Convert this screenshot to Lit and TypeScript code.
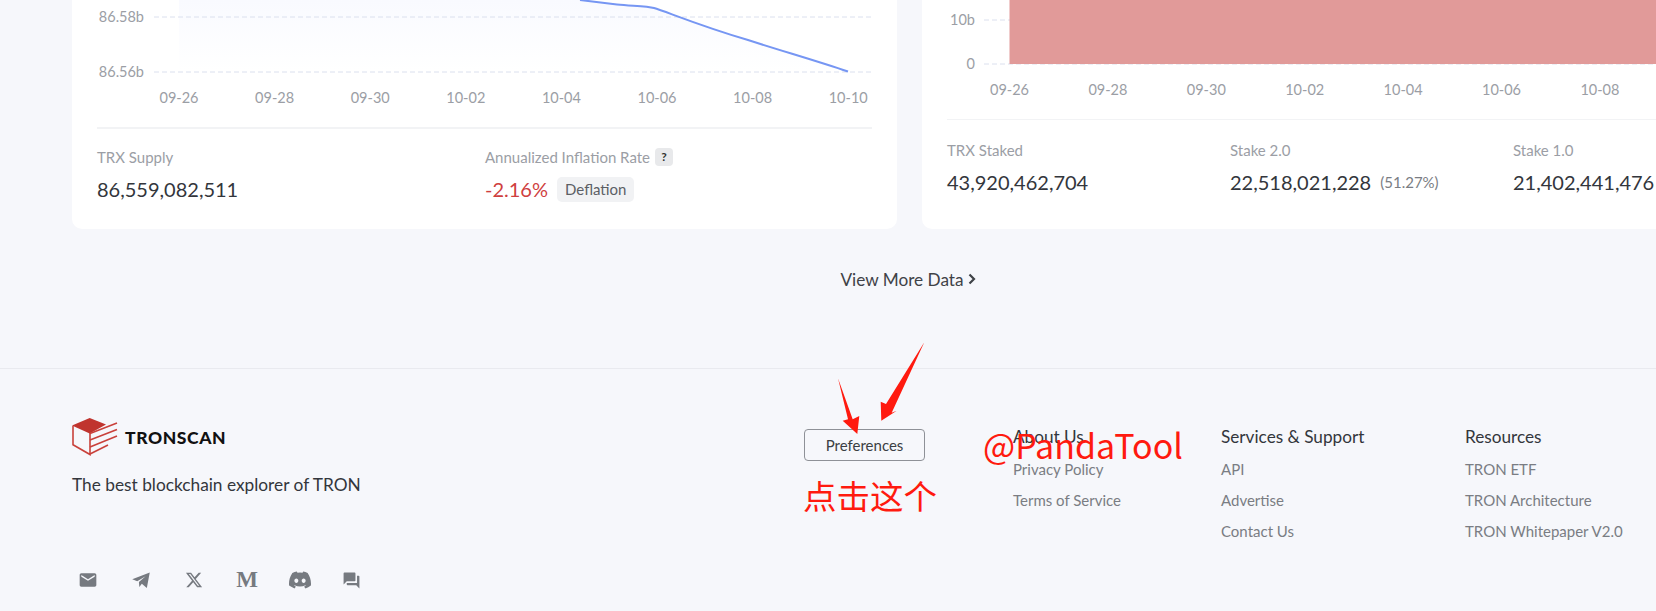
import { LitElement, html, css, svg } from 'lit';
import { customElement } from 'lit/decorators.js';

const leftDates = ['09-26', '09-28', '09-30', '10-02', '10-04', '10-06', '10-08', '10-10'];
const rightDates = leftDates.slice(0, 7);

const footerCols = [
  { title: 'About Us', links: ['Privacy Policy', 'Terms of Service'], width: 208 },
  { title: 'Services & Support', links: ['API', 'Advertise', 'Contact Us'], width: 244 },
  { title: 'Resources', links: ['TRON ETF', 'TRON Architecture', 'TRON Whitepaper V2.0'], width: 191 },
];

const linePath = 'M483 0L520 4.5C535 6 550 6 557 8C568 11 600 25 651 40C685 51 720 61 751 71.5';

@customElement('supply-chart')
export class SupplyChart extends LitElement {
  static styles = css`
    :host { display: block; height: 127px; }
    svg { display: block; width: 775px; height: 127px; overflow: visible; }
    text { font: 14.5px Lato, sans-serif; fill: #9b9ea5; }
    .grid { stroke: #dbe0ee; stroke-dasharray: 5 3; }
  `;

  render() {
    return html`<svg viewBox="0 0 775 127">
      <defs>
        <linearGradient id="fade" x1="0" y1="0" x2="0" y2="1">
          <stop offset="0" stop-color="#f9faff"></stop>
          <stop offset="1" stop-color="#ffffff"></stop>
        </linearGradient>
      </defs>
      <path d="M82 0H483L520 4.5C535 6 550 6 557 8C568 11 600 25 651 40C685 51 720 61 751 71.5H82Z" fill="url(#fade)"></path>
      <line class="grid" x1="57" x2="775" y1="17" y2="17"></line>
      <line class="grid" x1="57" x2="775" y1="72" y2="72"></line>
      <text x="47" y="22" text-anchor="end">86.58b</text>
      <text x="47" y="77" text-anchor="end">86.56b</text>
      ${leftDates.map((d, i) => svg`<text x=${82 + i * 95.6} y="103" text-anchor="middle">${d}</text>`)}
      <path d=${linePath} fill="none" stroke="#7696f3" stroke-width="2"></path>
    </svg>`;
  }
}

@customElement('staked-chart')
export class StakedChart extends LitElement {
  static styles = css`
    :host { display: block; height: 119px; }
    svg { display: block; width: 709px; height: 119px; overflow: hidden; }
    text { font: 14.5px Lato, sans-serif; fill: #9b9ea5; }
    .grid { stroke: #dbe0ee; stroke-dasharray: 5 3; }
  `;

  render() {
    return html`<svg viewBox="0 0 709 119">
      <line class="grid" x1="37" x2="709" y1="20" y2="20"></line>
      <line class="grid" x1="37" x2="709" y1="64" y2="64"></line>
      <rect x="62.5" y="0" width="647" height="64" fill="#e09695" fill-opacity=".96"></rect>
      <text x="28" y="25" text-anchor="end">10b</text>
      <text x="28" y="69" text-anchor="end">0</text>
      ${rightDates.map((d, i) => svg`<text x=${62.5 + i * 98.4} y="95" text-anchor="middle">${d}</text>`)}
    </svg>`;
  }
}

@customElement('app-root')
export class AppRoot extends LitElement {
  static styles = css`
    :host {
      display: block;
      position: relative;
      width: 1656px;
      height: 611px;
      overflow: hidden;
      background: #f6f7fb;
      font-family: Lato, sans-serif;
    }
    .cards {
      display: flex;
      gap: 25px;
      padding-left: 72px;
    }
    .card {
      flex: none;
      box-sizing: border-box;
      height: 229px;
      padding: 0 25px;
      background: #fff;
      border-radius: 0 0 10px 10px;
    }
    .card.supply { width: 825px; }
    .card.staked { width: 800px; }
    .stats {
      display: flex;
      border-top: 2px solid #f2f3f5;
      padding-top: 18px;
    }
    .card.staked .stats { border-top-width: 1px; padding-top: 20px; }
    .stat { flex: none; width: 388px; }
    .card.staked .stat { width: 283px; }
    .label {
      display: flex;
      align-items: center;
      gap: 5px;
      height: 20px;
      font-size: 15px;
      color: #9b9ea5;
    }
    .help {
      width: 18px;
      height: 18px;
      border-radius: 4px;
      background: #e8e9eb;
      color: #333;
      font-size: 12px;
      font-weight: 700;
      text-align: center;
      line-height: 18px;
    }
    .value {
      display: flex;
      align-items: center;
      gap: 9px;
      height: 26px;
      margin-top: 9px;
      font-size: 20px;
      color: #33363c;
    }
    .red { color: #cf3f3f; }
    .tag {
      padding: 0 8px;
      height: 25px;
      line-height: 25px;
      border-radius: 5px;
      background: #f1f2f4;
      color: #5c5f65;
      font-size: 15px;
    }
    .pct { font-size: 15px; color: #7a7d83; }
    .more {
      display: flex;
      justify-content: center;
      align-items: center;
      gap: 4px;
      height: 24px;
      margin-top: 38px;
      padding-left: 160px;
      font-size: 17.2px;
      color: #3f4247;
    }
    .more svg { width: 8px; height: 12px; }
    footer {
      display: flex;
      margin-top: 77px;
      padding: 0 0 0 72px;
      border-top: 1px solid #e9eaef;
      height: 243px;
      box-sizing: border-box;
    }
    .brand {
      flex: none;
      width: 732px;
      padding-top: 49px;
    }
    .logo {
      display: flex;
      align-items: center;
      gap: 7px;
      height: 38px;
    }
    .logo svg { width: 46px; height: 38px; }
    .logo span {
      font-size: 17.5px;
      font-weight: 900;
      letter-spacing: .6px;
      color: #111;
    }
    .tagline {
      margin-top: 17px;
      font-size: 17.3px;
      line-height: 24px;
      color: #33363c;
    }
    .social {
      display: flex;
      gap: 21px;
      margin-top: 71px;
    }
    .social > * {
      flex: none;
      width: 32px;
      height: 24px;
      display: flex;
      align-items: center;
      justify-content: center;
      color: #767a80;
    }
    .social > :last-child { margin-left: -2px; }
    .social svg { fill: currentColor; }
    .medium {
      font: 700 23px "Liberation Serif", serif;
    }
    .prefs { flex: none; width: 209px; padding-top: 60px; }
    button {
      display: block;
      width: 121px;
      height: 32px;
      padding: 0;
      box-sizing: border-box;
      border: 1px solid #8e9197;
      border-radius: 4px;
      background: transparent;
      color: #3b3e43;
      font: 15px Lato, sans-serif;
    }
    .col { flex: none; padding-top: 56px; }
    .col h4 {
      margin: 0 0 2px;
      height: 24px;
      line-height: 24px;
      font-size: 17.2px;
      font-weight: 400;
      color: #33363c;
    }
    .col a {
      display: block;
      margin-top: 9px;
      height: 22px;
      line-height: 22px;
      font-size: 15px;
      color: #7a7d83;
    }
    .annotation { position: absolute; inset: 0; pointer-events: none; }
    .annotation svg { position: absolute; inset: 0; width: 100%; height: 100%; }
    .note {
      position: absolute;
      color: #ff1a0f;
      font-family: "Noto Sans CJK SC", sans-serif;
      line-height: 1;
      white-space: nowrap;
    }
    .note.handle { left: 983px; top: 428px; font-size: 34px; }
    .note.zh { left: 803px; top: 478px; font-size: 33.5px; }
  `;

  render() {
    return html`
      <div class="cards">
        <section class="card supply">
          <supply-chart></supply-chart>
          <div class="stats">
            <div class="stat">
              <div class="label">TRX Supply</div>
              <div class="value">86,559,082,511</div>
            </div>
            <div class="stat">
              <div class="label">Annualized Inflation Rate <span class="help">?</span></div>
              <div class="value"><span class="red">-2.16%</span><span class="tag">Deflation</span></div>
            </div>
          </div>
        </section>
        <section class="card staked">
          <staked-chart></staked-chart>
          <div class="stats">
            <div class="stat">
              <div class="label">TRX Staked</div>
              <div class="value">43,920,462,704</div>
            </div>
            <div class="stat">
              <div class="label">Stake 2.0</div>
              <div class="value">22,518,021,228 <span class="pct">(51.27%)</span></div>
            </div>
            <div class="stat">
              <div class="label">Stake 1.0</div>
              <div class="value">21,402,441,476</div>
            </div>
          </div>
        </section>
      </div>

      <div class="more">
        View More Data
        <svg viewBox="0 0 8 12"><path d="M1.5 1.5 6 6 1.5 10.5" fill="none" stroke="currentColor" stroke-width="2.2"></path></svg>
      </div>

      <footer>
        <div class="brand">
          <div class="logo">
            <svg viewBox="0 0 46 38">
              <path d="M0 7.5 17.7 0 34 6.5 17.7 15.5Z" fill="#c0342e"></path>
              <path d="M1 8V26.7L18 36.5V15" fill="none" stroke="#c9413b" stroke-width="1.6"></path>
              <path d="M18 15.5 45 5M18 22 45 11.5M18 29 45 18M18 36 36 27" fill="none" stroke="#c9413b" stroke-width="1.6"></path>
            </svg>
            <span>TRONSCAN</span>
          </div>
          <div class="tagline">The best blockchain explorer of TRON</div>
          <div class="social">
            <span><svg width="20" height="20" viewBox="0 0 24 24"><path d="M20 4H4c-1.1 0-2 .9-2 2v12c0 1.1.9 2 2 2h16c1.1 0 2-.9 2-2V6c0-1.1-.9-2-2-2zm0 4l-8 5-8-5V6l8 5 8-5v2z"></path></svg></span>
            <span><svg width="20" height="20" viewBox="0 0 24 24"><path d="M1.5 11 22.5 3 19 21.5 13 16.5 10 20.5 9.5 14.5 17.5 7.5 7.5 13.5Z"></path></svg></span>
            <span><svg width="18" height="18" viewBox="0 0 24 24"><path d="M18.244 2.25h3.308l-7.227 8.26 8.502 11.24H16.17l-5.214-6.817L4.99 21.75H1.68l7.73-8.835L1.254 2.25H8.08l4.713 6.231zm-1.161 17.52h1.833L7.084 4.126H5.117z"></path></svg></span>
            <span class="medium">M</span>
            <span><svg width="22" height="22" viewBox="0 0 24 24"><path d="M20.317 4.37a19.791 19.791 0 0 0-4.885-1.515.074.074 0 0 0-.079.037c-.21.375-.444.864-.608 1.25a18.27 18.27 0 0 0-5.487 0 12.64 12.64 0 0 0-.617-1.25.077.077 0 0 0-.079-.037A19.736 19.736 0 0 0 3.677 4.37a.07.07 0 0 0-.032.027C.533 9.046-.32 13.58.099 18.057a.082.082 0 0 0 .031.057 19.9 19.9 0 0 0 5.993 3.03.078.078 0 0 0 .084-.028 14.09 14.09 0 0 0 1.226-1.994.076.076 0 0 0-.041-.106 13.107 13.107 0 0 1-1.872-.892.077.077 0 0 1-.008-.128 10.2 10.2 0 0 0 .372-.292.074.074 0 0 1 .077-.01c3.928 1.793 8.18 1.793 12.062 0a.074.074 0 0 1 .078.01c.12.098.246.198.373.292a.077.077 0 0 1-.006.127 12.299 12.299 0 0 1-1.873.892.077.077 0 0 0-.041.107c.36.698.772 1.362 1.225 1.993a.076.076 0 0 0 .084.028 19.839 19.839 0 0 0 6.002-3.03.077.077 0 0 0 .032-.054c.5-5.177-.838-9.674-3.549-13.66a.061.061 0 0 0-.031-.03zM8.02 15.33c-1.183 0-2.157-1.085-2.157-2.419 0-1.333.956-2.419 2.157-2.419 1.21 0 2.176 1.096 2.157 2.42 0 1.333-.956 2.418-2.157 2.418zm7.975 0c-1.183 0-2.157-1.085-2.157-2.419 0-1.333.955-2.419 2.157-2.419 1.21 0 2.176 1.096 2.157 2.42 0 1.333-.946 2.418-2.157 2.418z"></path></svg></span>
            <span><svg width="19" height="19" viewBox="0 0 24 24"><path d="M21 6h-2v9H6v2c0 .55.45 1 1 1h11l4 4V7c0-.55-.45-1-1-1zm-4 6V3c0-.55-.45-1-1-1H3c-.55 0-1 .45-1 1v14l4-4h10c.55 0 1-.45 1-1z"></path></svg></span>
          </div>
        </div>
        <div class="prefs"><button>Preferences</button></div>
        ${footerCols.map(
          (c) => html`<div class="col" style="width:${c.width}px">
            <h4>${c.title}</h4>
            ${c.links.map((l) => html`<a>${l}</a>`)}
          </div>`
        )}
      </footer>

      <div class="annotation">
        <svg viewBox="0 0 1656 611">
          <path d="M838 378.3 852.7 419.3 859.3 416 857.3 434 842.7 420.7 848 419.3Z" fill="#ff1a0f"></path>
          <path d="M924.3 342.3 891.7 412.7 896.7 410.7 881.3 420.7 880.7 401.7 886 404Z" fill="#ff1a0f"></path>
        </svg>
        <span class="note handle">@PandaTool</span>
        <span class="note zh">点击这个</span>
      </div>
    `;
  }
}
